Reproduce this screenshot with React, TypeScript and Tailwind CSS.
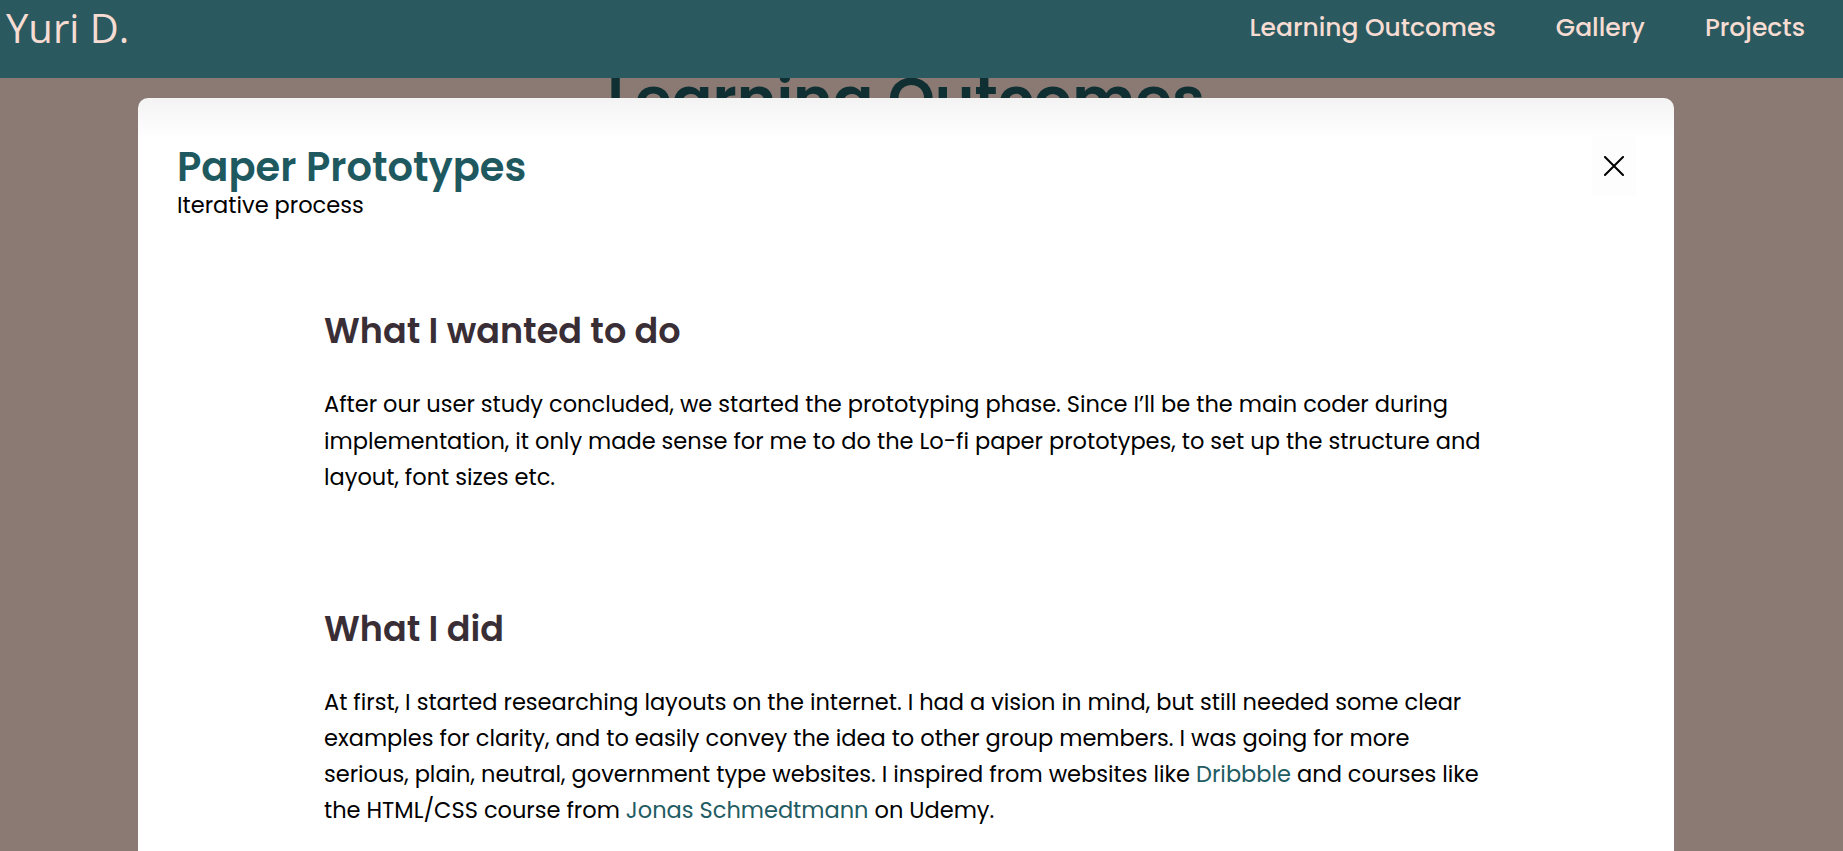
import React from 'react';

const sans = "font-['Poppins','Inter',sans-serif]";

const Navbar = () => {
    return (
        <nav className="relative z-20 h-[78px] bg-[#2a5a60] flex items-start justify-between">
            <a href="#" className="mt-[8px] pl-[6px] font-['Open_Sans',sans-serif] font-normal text-[40px] leading-[40px] text-[#f6dcd2]">
                Yuri D.
            </a>
            <ul className={`${sans} mt-[15px] pr-[38px] flex gap-[60px] font-medium text-[25px] leading-[25px] text-[#f6dcd2]`}>
                <li><a href="#">Learning Outcomes</a></li>
                <li><a href="#">Gallery</a></li>
                <li><a href="#">Projects</a></li>
            </ul>
        </nav>
    );
};

const CloseIcon = () => (
    <svg width="20" height="20" viewBox="0 0 20 20" fill="none" aria-hidden="true">
        <path d="M1 1L19 19M19 1L1 19" stroke="#000" strokeWidth="2" strokeLinecap="square" />
    </svg>
);

export default function App() {
    return (
        <div className="relative h-[851px] overflow-hidden bg-[#8b7a73]">
            <Navbar />

            {/* page behind the dialog */}
            <main className="pr-[31px] text-center">
                <h1 className={`${sans} -mt-[9px] font-semibold text-[60px] leading-[60px] text-[#0f2f33]`}>
                    Learning Outcomes
                </h1>
            </main>

            {/* dialog */}
            <div className="absolute inset-x-0 top-[98px] bottom-0 z-10 pl-[138px]">
                <div className={`${sans} w-[1536px] h-[900px] rounded-t-[10px] bg-[linear-gradient(to_bottom,#f3f3f3_0px,#ffffff_40px)]`}>
                    <div className="flex items-start justify-between pl-[39px] pr-[38px] pt-[45px]">
                        <div>
                            <h2 className="font-semibold text-[40px] leading-[48px] text-[#1f5960]">Paper Prototypes</h2>
                            <p className="text-[22.5px] leading-[28px] text-black">Iterative process</p>
                        </div>
                        <button className="-mt-[7px] w-[44px] h-[60px] flex items-center justify-center bg-[#fdfdfd]">
                            <CloseIcon />
                        </button>
                    </div>

                    <div className="w-[1164px] mx-auto mt-[92px]">
                        <section>
                            <h3 className="font-semibold text-[35px] leading-[40px] text-[#3a2e36]">What I wanted to do</h3>
                            <p className="mt-[35px] text-[22.5px] leading-[36.5px] text-black">
                                After our user study concluded, we started the prototyping phase. Since I’ll be the main coder during implementation, it only made sense for me to do the Lo-fi paper prototypes, to set up the structure and layout, font sizes etc.
                            </p>
                        </section>
                        <section className="mt-[113px]">
                            <h3 className="font-semibold text-[35px] leading-[40px] text-[#3a2e36]">What I did</h3>
                            <p className="mt-[35px] text-[22.5px] leading-[36px] text-black">
                                At first, I started researching layouts on the internet. I had a vision in mind, but still needed some clear examples for clarity, and to easily convey the idea to other group members. I was going for more serious, plain, neutral, government type websites. I inspired from websites like <a href="#" className="text-[#1f5c63]">Dribbble</a> and courses like the HTML/CSS course from <a href="#" className="text-[#1f5c63]">Jonas Schmedtmann</a> on Udemy.
                            </p>
                        </section>
                    </div>
                </div>
            </div>
        </div>
    );
}
